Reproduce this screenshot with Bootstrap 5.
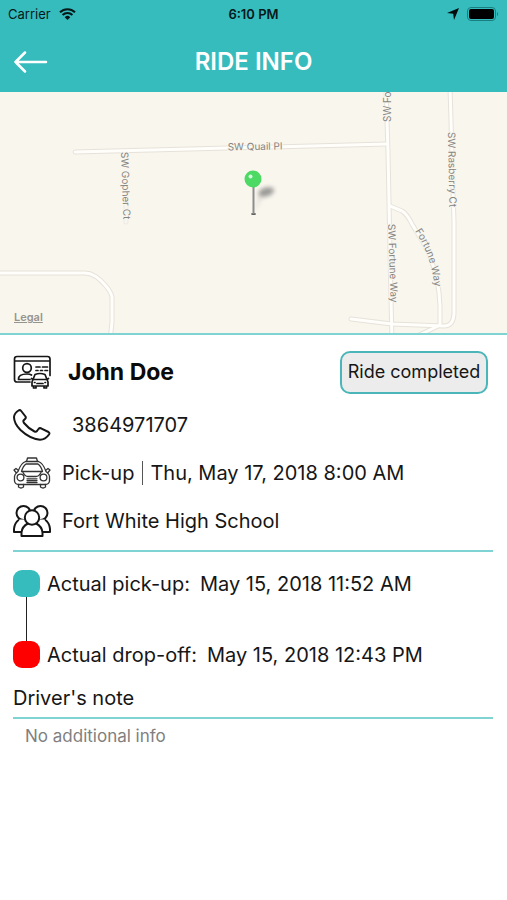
<!DOCTYPE html>
<html lang="en">
<head>
<meta charset="utf-8">
<meta name="viewport" content="width=device-width, initial-scale=1">
<title>Ride info</title>
<link href="https://cdn.jsdelivr.net/npm/bootstrap@5.3.0/dist/css/bootstrap.min.css" rel="stylesheet">
<style>
  :root { --teal: #37bcbd; --teal-soft: #7fd3d2; }
  body { font-family: Inter, "Liberation Sans", sans-serif; color: #161616; background: #fff; font-size: 20px; line-height: 28px; }
  svg { display: block; flex: none; }
  .app-top { background: var(--teal); }
  .status-bar { height: 28px; font-size: 13px; line-height: 16px; color: #06191a; }
  .title-bar { height: 64px; padding-top: 4px; color: #fff; }
  .title-bar h1 { font-size: 24px; line-height: 28px; font-weight: 600; }
  .side { flex: 1 1 0; }
  .back-btn { color: #fff; margin-left: 14px; }
  .map-view { height: 243px; background: #f9f6ee; border-bottom: 2px solid var(--teal-soft); }
  .map-view text { font-size: 10px; fill: #858582; stroke: #f9f6ee; stroke-width: 2px; paint-order: stroke; }
  .legal { left: 14px; bottom: 8px; font-size: 11px; line-height: 16px; font-weight: 600; color: #96948e; }
  .details { padding: 16px 14px 0 13px; }
  .person { height: 42px; padding-right: 5px; }
  .person h2 { font-size: 23px; line-height: 28px; font-weight: 700; color: #0a0a0a; padding-left: 17px; }
  .state-btn { height: 43px; width: 148px; padding: 0; font-size: 18px; line-height: 24px; color: #161616; background: #ececec; border: 2px solid #4bb6b9; border-radius: 10px; }
  .info-row { height: 48px; }
  .info-text { padding-left: 11px; }
  .phone-text { padding-left: 21px; color: #161616; }
  .bar { width: 1px; height: 24px; background: #555; margin: 0 7px 0 8px; }
  .rule { height: 2px; margin-top: 5px; background: var(--teal-soft); }
  .stops { padding-top: 18px; }
  .stop { height: 27px; }
  .stop-mark { width: 27px; height: 27px; border-radius: 9px; margin-right: 7px; }
  .stop-gap { width: 1px; height: 44px; margin-left: 13px; background: #222; }
  .gap-text { margin-left: 10px; }
  .note-label { margin-top: 16px; }
  .note-text { font-size: 17px; line-height: 24px; color: #808080; padding: 5px 12px; }
</style>
</head>
<body>
<header class="app-top">
  <div class="status-bar d-flex align-items-center px-2">
    <div class="side d-flex align-items-center gap-2">
      <span>Carrier</span>
      <svg width="17" height="12" viewBox="0 0 17 12" fill="none" stroke="#06191a" stroke-width="2.2" aria-hidden="true"><path d="M1 4.3a10.800 10.800 0 0 1 15 0M3.600 7a7 7 0 0 1 9.800 0"/><path d="M8.500 12 5.700 9.200a4 4 0 0 1 5.600 0z" fill="#06191a" stroke="none"/></svg>
    </div>
    <span class="fw-semibold">6:10 PM</span>
    <div class="side d-flex align-items-center justify-content-end gap-2">
      <svg width="12" height="12" viewBox="0 0 12 12" aria-hidden="true"><path d="M12 0 7 12 6.200 5.800 0 5z" fill="#020c0c"/></svg>
      <svg width="32" height="14" viewBox="0 0 32 14" aria-hidden="true"><rect x=".5" y=".5" width="28" height="13" rx="3.500" fill="none" stroke="#1a7e80"/><rect x="2" y="2" width="25" height="10" rx="2" fill="#000"/><path d="M30 4.700q2.200 2.300 0 4.600z" fill="#1a7e80"/></svg>
    </div>
  </div>
  <div class="title-bar d-flex align-items-center">
    <div class="side">
      <button type="button" class="btn back-btn d-block border-0 p-0" aria-label="Back">
        <svg width="34" height="22" viewBox="1 0 34 22" fill="none" stroke="currentColor" stroke-width="2.500" stroke-linecap="round" stroke-linejoin="round"><path d="M33 11H2.500M12 1.500 2.500 11l9.500 9.500"/></svg>
      </button>
    </div>
    <h1 class="m-0">RIDE INFO</h1>
    <div class="side"></div>
  </div>
</header>

<main>
  <section class="map-view position-relative overflow-hidden" aria-label="Map">
    <svg class="w-100 h-100" viewBox="0 0 507 241" preserveAspectRatio="xMidYMid slice">
      <defs>
        <filter id="soft" x="-50%" y="-50%" width="200%" height="200%"><feGaussianBlur stdDeviation="2"/></filter>
        <g id="roads" fill="none" stroke-linecap="round" stroke-linejoin="round">
          <path d="M75 60 387 52"/>
          <path d="M386-5 388 60 390 160 392 250"/>
          <path d="M450-5 454 130 454 220Q454 234 444 234L392 232 351 227"/>
          <path d="M390 114 402 119Q407 122 412 132L424 152Q439 180 440 214L440 233Q428 239 415 245"/>
          <path d="M-5 181H85Q95 181 106 194Q111 200 112 205V230L110 250"/>
          <path d="M126 105V130" stroke-opacity=".5"/>
        </g>
        <path id="fortune" d="M415 139Q435 170 435 206"/>
      </defs>
      <use href="#roads" stroke="#e6e2da" stroke-width="5"/>
      <use href="#roads" stroke="#fffefb" stroke-width="3"/>
      <text x="255" y="58" text-anchor="middle" transform="rotate(-1 255 54)">SW Quail Pl</text>
      <text transform="translate(121 60) rotate(88)">SW Gopher Ct</text>
      <text transform="translate(391 30) rotate(-90)">SW Fo</text>
      <text transform="translate(388 132) rotate(88)">SW Fortune Way</text>
      <text transform="translate(448 40) rotate(89)">SW Rasberry Ct</text>
      <text><textPath href="#fortune">Fortune Way</textPath></text>
      <path d="M254 121 260 99Q267 91 275 97Q272 105 262 106z" fill="#777" opacity=".2" filter="url(#soft)"/>
      <ellipse cx="266" cy="100" rx="8" ry="4" fill="#555" opacity=".5" filter="url(#soft)" transform="rotate(-15 266 100)"/>
      <ellipse cx="253.500" cy="122" rx="2.500" ry="1" fill="#555"/>
      <path d="M253.500 93V122" stroke="#8d8d8d" stroke-width="2"/>
      <circle cx="253" cy="87" r="8.500" fill="#4cd964"/>
      <circle cx="250.500" cy="84.500" r="2" fill="#d6f8dc"/>
    </svg>
    <a href="#" class="legal position-absolute">Legal</a>
  </section>

  <section class="details">
    <div class="person d-flex align-items-center">
      <svg width="38" height="34" viewBox="0 0 38 34" fill="none" stroke="#161616" stroke-width="1.700" stroke-linecap="round" stroke-linejoin="round" aria-hidden="true">
        <path d="M17 27H4q-2.500 0-2.500-2.500V4Q1.500 1.500 4 1.500H34.500Q37 1.500 37 4V20.500M1.500 6H37"/>
        <circle cx="14" cy="13" r="4.300"/><path d="M5.500 24.500Q5 19 14 19Q17 19 18.500 20M5.500 24.500H17"/>
        <path d="M23 12h4M29.500 12h5M23 15.500h2M27.500 15.500h2M32 15.500h2.500"/>
        <path d="M20 24.500 22 19.500Q27 17.500 32 19.500L34 24.500M20 24.500H34L35 27V31H19V27zM18.500 23.500l1.500 1M35.500 23.500l-1.500 1M20.500 31v2h2.500V31M31 31v2h2.500V31M24 28.500h6M21.500 27.500h.5M32 27.500h.5"/>
      </svg>
      <h2 class="m-0 flex-grow-1">John Doe</h2>
      <button type="button" class="btn state-btn">Ride completed</button>
    </div>

    <div class="info-row d-flex align-items-center mt-2">
      <svg width="38" height="32" viewBox="0 0 38 32" fill="none" stroke="#161616" stroke-width="2" stroke-linejoin="round" aria-hidden="true"><path d="M5.500 1.500Q7 .5 8.200 2L12.500 7.500Q13.300 8.800 12 10L10.500 11.500Q10 12.500 11 14Q15.500 19.500 21.500 22.500Q23 23.200 24 22L25.500 20Q26.500 18.700 28 19.300L35.500 23Q37 24 36 25.500Q32.500 30.500 27 30.800Q16.500 29.500 7.500 21Q1 14.500 1 8Q1.500 4 5.500 1.500z"/></svg>
      <a href="tel:3864971707" class="phone-text text-decoration-none">3864971707</a>
    </div>

    <div class="info-row d-flex align-items-center">
      <svg width="38" height="32" viewBox="0 0 38 32" fill="none" stroke="#333" stroke-width="1.300" stroke-linejoin="round" stroke-linecap="round" aria-hidden="true">
        <path d="M13.500 4.500 14.500 1H23.500L24.500 4.500zM5 14.500Q8 6 12.500 4.500H25.500Q30 6 33 14.500M8.500 14.500Q10 9 13 7H25Q28 9 29.500 14.500M8.500 14.500H29.500M5 14.500Q1 17.500 1.500 21V24Q2 27.500 6 27.500H32Q36 27.500 36.500 24V21Q37 17.500 33 14.500M5.500 13.500 3 11.500 1 13 3 15.500M32.500 13.500 35 11.500 37 13 35 15.500"/>
        <circle cx="7.500" cy="20.500" r="3.400"/><circle cx="30.500" cy="20.500" r="3.400"/>
        <path d="M10 15.500Q12 19.500 15 19.500H23Q26 19.500 28 15.500M14 21.800H24M14 23.600H24M14 25.500H24M5.500 27.500V30Q8 32 10.500 30V27.500M27.500 27.500V30Q30 32 32.500 30V27.500"/>
      </svg>
      <span class="info-text">Pick-up</span><span class="bar"></span><span>Thu, May 17, 2018 8:00 AM</span>
    </div>

    <div class="info-row d-flex align-items-center">
      <svg width="38" height="32" viewBox="0 0 38 32" stroke="#161616" stroke-width="2" stroke-linejoin="round" aria-hidden="true">
        <g fill="#fff"><path d="M1 27V24Q1.500 17.500 6.500 14.500H14V27zM37 27V24Q36.500 17.500 31.500 14.500H24V27z"/>
        <circle cx="10.500" cy="8" r="7"/><circle cx="27.500" cy="8" r="7"/>
        <path d="M6.500 14.500H14V18H5.500zM31.500 14.500H24V18H32.500z" stroke="none"/>
        <path d="M8.500 31V27.500Q9 21.500 15 18.500H23Q29 21.500 29.500 27.500V31z"/>
        <circle cx="19" cy="12.500" r="7.200"/></g>
      </svg>
      <span class="info-text">Fort White High School</span>
    </div>

    <div class="rule"></div>

    <div class="stops">
      <div class="stop d-flex align-items-center">
        <span class="stop-mark" style="background:#37bcbd"></span><span>Actual pick-up:</span><span class="gap-text">May 15, 2018 11:52 AM</span>
      </div>
      <div class="stop-gap"></div>
      <div class="stop d-flex align-items-center">
        <span class="stop-mark" style="background:#f00"></span><span>Actual drop-off:</span><span class="gap-text">May 15, 2018 12:43 PM</span>
      </div>
    </div>

    <div class="note-label">Driver's note</div>
    <div class="rule"></div>
    <p class="note-text m-0">No additional info</p>
  </section>
</main>
<script src="https://cdn.jsdelivr.net/npm/bootstrap@5.3.0/dist/js/bootstrap.bundle.min.js"></script>
</body>
</html>
